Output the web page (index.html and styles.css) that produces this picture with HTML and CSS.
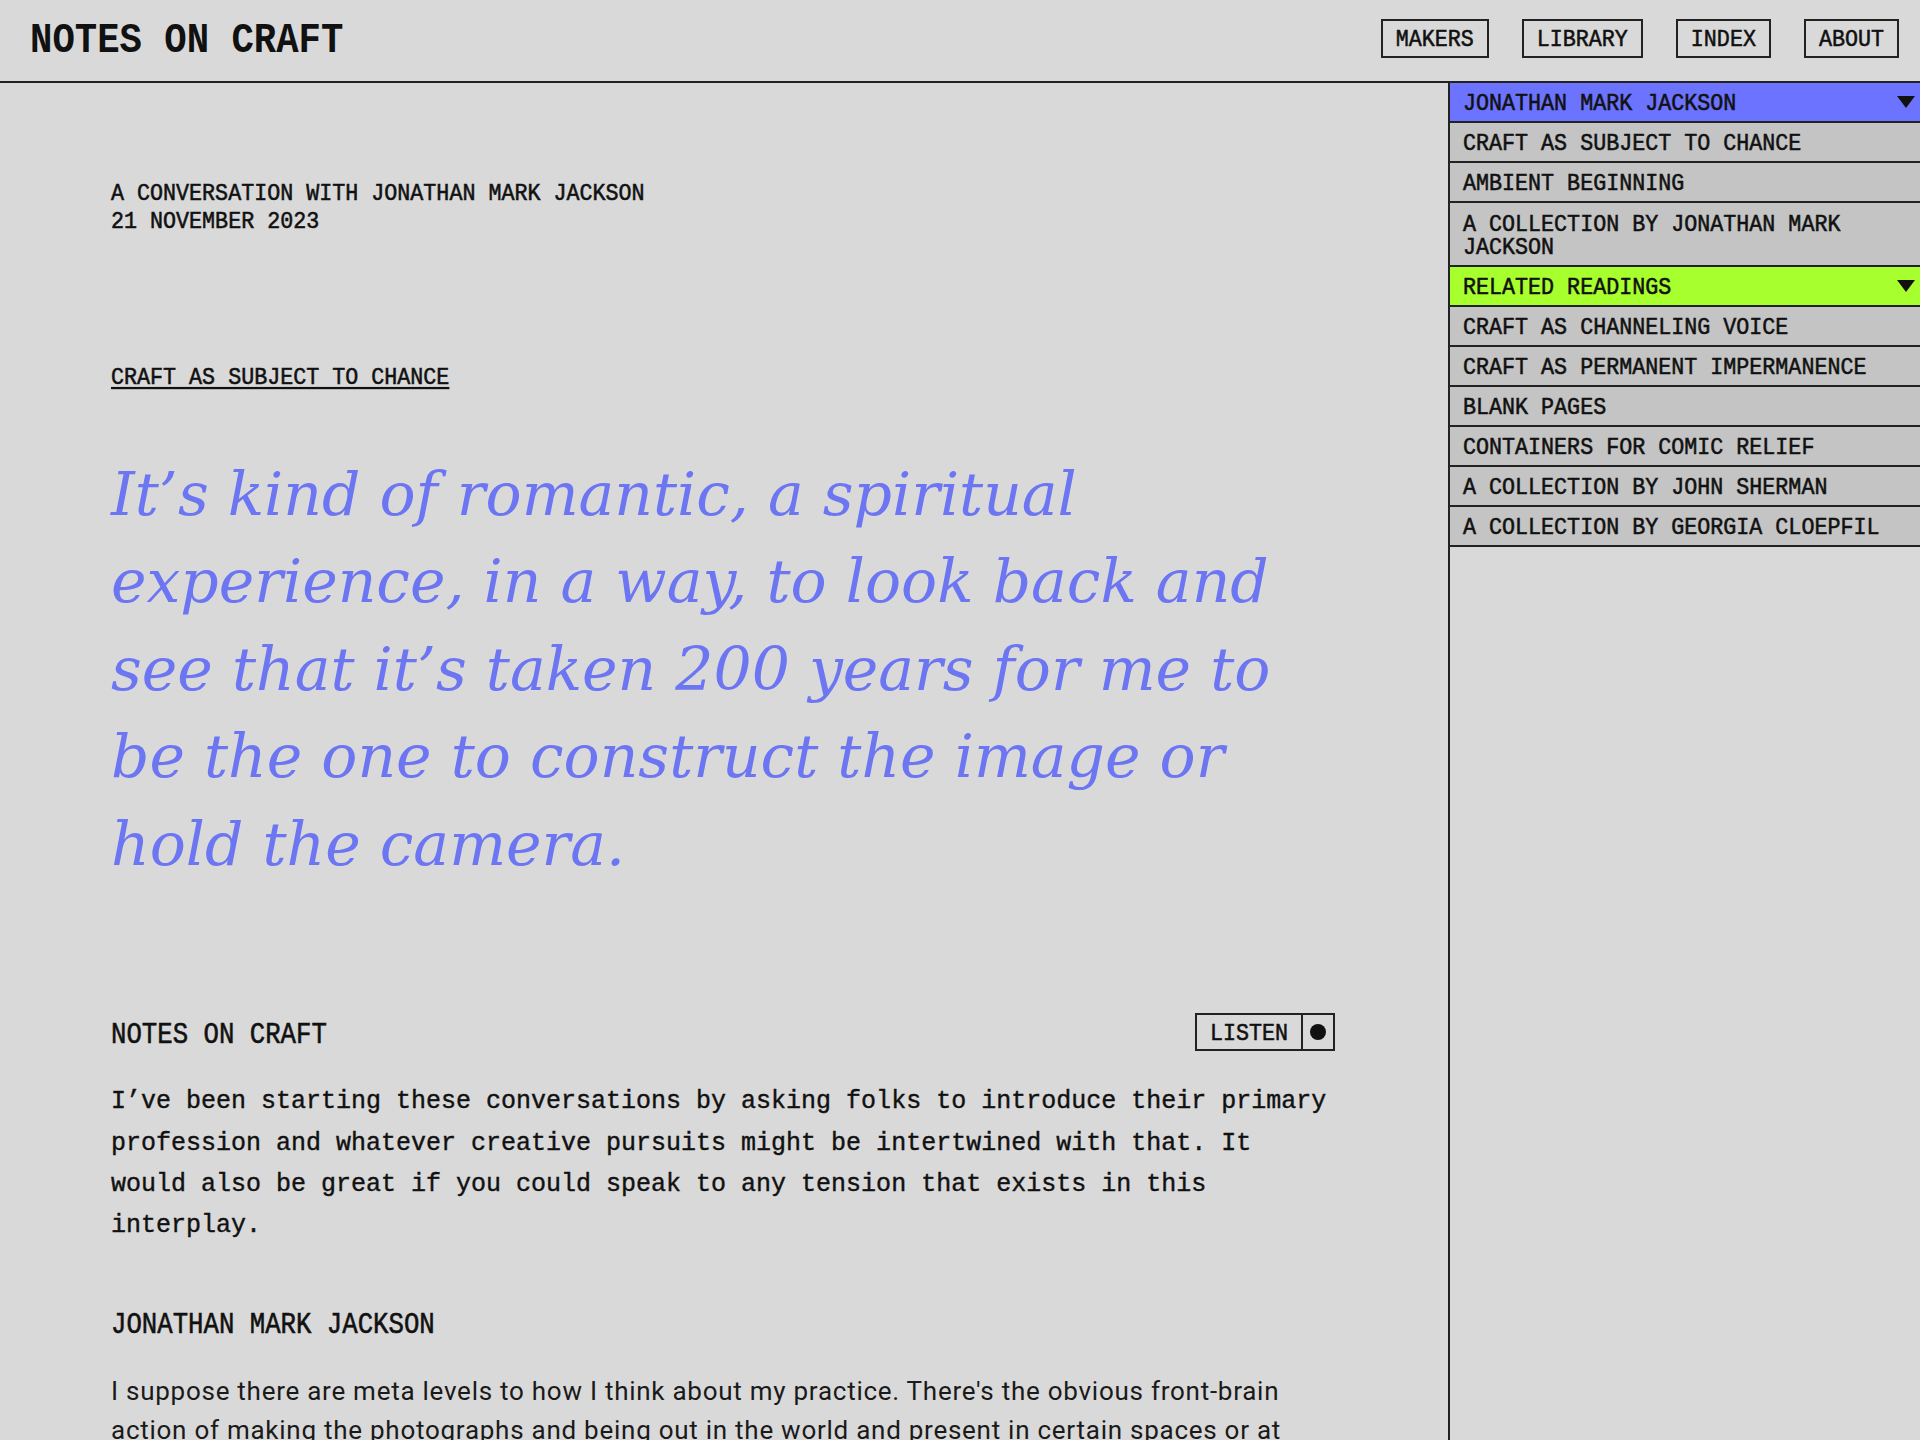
FILE: index.html
```html
<!DOCTYPE html>
<html lang="en">
<head>
<meta charset="utf-8">
<title>Notes on Craft</title>
<link rel="stylesheet" href="styles.css">
</head>
<body>
<header class="topbar">
  <div class="brand"><span class="sq">NOTES ON CRAFT</span></div>
  <nav class="nav">
    <a class="navbtn" href="#"><span class="sq">MAKERS</span></a>
    <a class="navbtn" href="#"><span class="sq">LIBRARY</span></a>
    <a class="navbtn" href="#"><span class="sq">INDEX</span></a>
    <a class="navbtn" href="#"><span class="sq">ABOUT</span></a>
  </nav>
</header>
<div class="layout">
  <main class="main">
    <div class="meta">
      <div>A CONVERSATION WITH JONATHAN MARK JACKSON</div>
      <div>21 NOVEMBER 2023</div>
    </div>
    <div class="kicker"><a href="#">CRAFT AS SUBJECT TO CHANCE</a></div>
    <blockquote class="quote">It’s kind of romantic, a spiritual experience, in a way, to look back and see that it’s taken 200 years for me to be the one to construct the image or hold the camera.</blockquote>
    <div class="sec">
      <div class="sec-label"><span class="sq">NOTES ON CRAFT</span></div>
      <div class="listen">
        <div class="listen-txt"><span class="sq">LISTEN</span></div>
        <div class="listen-dot"><span class="dot"></span></div>
      </div>
    </div>
    <p class="mono-p">I’ve been starting these conversations by asking folks to introduce their primary profession and whatever creative pursuits might be intertwined with that. It would also be great if you could speak to any tension that exists in this interplay.</p>
    <div class="speaker"><span class="sq">JONATHAN MARK JACKSON</span></div>
    <p class="sans-p">I suppose there are meta levels to how I think about my practice. There's the obvious front-brain action of making the photographs and being out in the world and present in certain spaces or at certain times, and then there's the slower work of sitting with the images afterwards.</p>
  </main>
  <aside class="aside">
    <div class="sb-row head blue"><span class="sb-txt">JONATHAN MARK JACKSON</span><svg class="tri" width="18" height="12" viewBox="0 0 18 12"><polygon points="0,0 18,0 9,12" fill="#111"/></svg></div>
    <div class="sb-row"><span class="sb-txt">CRAFT AS SUBJECT TO CHANCE</span></div>
    <div class="sb-row"><span class="sb-txt">AMBIENT BEGINNING</span></div>
    <div class="sb-row tall"><span class="sb-txt">A COLLECTION BY JONATHAN MARK JACKSON</span></div>
    <div class="sb-row head green"><span class="sb-txt">RELATED READINGS</span><svg class="tri" width="18" height="12" viewBox="0 0 18 12"><polygon points="0,0 18,0 9,12" fill="#111"/></svg></div>
    <div class="sb-row"><span class="sb-txt">CRAFT AS CHANNELING VOICE</span></div>
    <div class="sb-row"><span class="sb-txt">CRAFT AS PERMANENT IMPERMANENCE</span></div>
    <div class="sb-row"><span class="sb-txt">BLANK PAGES</span></div>
    <div class="sb-row"><span class="sb-txt">CONTAINERS FOR COMIC RELIEF</span></div>
    <div class="sb-row"><span class="sb-txt">A COLLECTION BY JOHN SHERMAN</span></div>
    <div class="sb-row"><span class="sb-txt">A COLLECTION BY GEORGIA CLOEPFIL</span></div>
  </aside>
</div>
</body>
</html>
```
FILE: styles.css
```css
* { box-sizing: border-box; }

html, body {
  margin: 0;
  padding: 0;
}

body {
  background: #d9d9d9;
  color: #111;
  font-family: "Liberation Mono", "Courier New", monospace;
  overflow: hidden;
}

.sq {
  display: inline-block;
  transform: scaleY(1.12);
}

/* Header */
.topbar {
  height: 83px;
  border-bottom: 2px solid #222;
  display: flex;
  align-items: center;
  justify-content: space-between;
  padding: 0 21px 5px 30px;
}

.brand {
  padding-top: 7px;
  font-size: 37.3px;
  font-weight: 700;
  line-height: 1;
}

.nav {
  display: flex;
  gap: 33px;
}

.navbtn {
  display: flex;
  align-items: center;
  height: 39px;
  padding: 3px 13px 0;
  border: 2px solid #222;
  font-size: 21.7px;
  line-height: 1;
  color: #111;
  text-decoration: none;
  -webkit-text-stroke: 0.5px #111;
}

/* Layout */
.layout {
  display: flex;
  min-height: calc(100vh - 83px);
}

.main {
  flex: 1;
  padding: 101px 113px 0 111px;
}

.aside {
  width: 472px;
  flex: none;
  border-left: 2px solid #222;
}

/* Sidebar */
.sb-row {
  display: flex;
  align-items: center;
  justify-content: space-between;
  height: 40px;
  border-bottom: 2px solid #222;
  padding: 3px 30px 0 13px;
  background: #c4c4c4;
  font-size: 21.7px;
  -webkit-text-stroke: 0.5px #111;
}

.sb-row.head { padding-right: 5px; }
.sb-row.blue { background: #6b73ff; }
.sb-row.green { background: #a7ff2e; }
.sb-row.tall { height: 64px; padding-top: 5px; }

.sb-txt {
  display: block;
  line-height: 19.6px;
  transform: scaleY(1.12);
}

.tri { flex: none; display: block; margin-top: -3px; }

/* Main content */
.meta {
  font-size: 21.7px;
  line-height: 24.5px;
  transform: scaleY(1.12);
  transform-origin: 0 50%;
  -webkit-text-stroke: 0.5px #111;
}

.kicker {
  margin-top: 133px;
  font-size: 21.7px;
  line-height: 24.5px;
  transform: scaleY(1.12);
  transform-origin: 0 50%;
  -webkit-text-stroke: 0.5px #111;
}

.kicker a {
  color: #111;
  text-decoration: underline;
  text-decoration-thickness: 1.5px;
  text-underline-offset: 3px;
}

.quote {
  margin: 60px 0 0;
  max-width: 1190px;
  font-family: "DejaVu Serif", "Liberation Serif", serif;
  font-style: italic;
  font-size: 60px;
  line-height: 87.6px;
  color: #6c75f2;
}

.sec {
  margin-top: 125px;
  height: 38px;
  display: flex;
  align-items: center;
  justify-content: space-between;
}

.sec-label {
  padding-top: 6px;
  font-size: 25.7px;
  line-height: 1;
  -webkit-text-stroke: 0.5px #111;
}

.listen {
  display: flex;
  height: 38px;
  border: 2px solid #222;
}

.listen-txt {
  display: flex;
  align-items: center;
  padding: 3px 13px 0;
  border-right: 2px solid #222;
  font-size: 21.7px;
  line-height: 1;
  -webkit-text-stroke: 0.5px #111;
}

.listen-dot {
  width: 30px;
  display: flex;
  align-items: center;
  justify-content: center;
}

.dot {
  width: 16px;
  height: 16px;
  border-radius: 50%;
  background: #111;
}

.mono-p {
  margin: 30px 0 0;
  font-size: 25px;
  line-height: 41.3px;
  -webkit-text-stroke: 0.4px #111;
}

.speaker {
  margin-top: 66px;
  font-size: 25.7px;
  line-height: 26px;
  -webkit-text-stroke: 0.5px #111;
}

.sans-p {
  margin: 33px 0 0;
  font-family: Roboto, "Liberation Sans", sans-serif;
  font-size: 26px;
  line-height: 39px;
  letter-spacing: 0.74px;
  color: #1a1a1a;
}
```
